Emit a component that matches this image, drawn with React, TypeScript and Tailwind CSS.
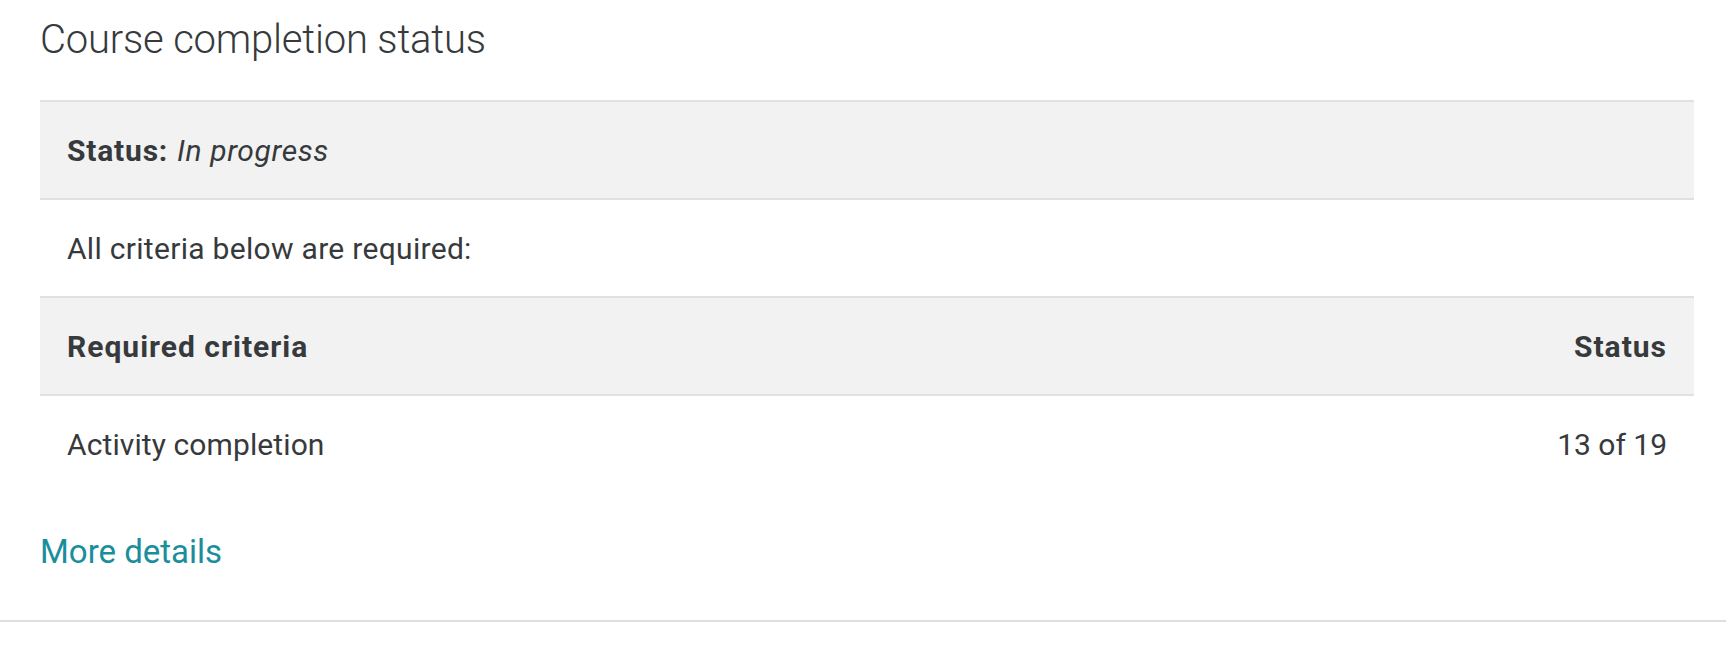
export default function App() {
  return (
    <div className="min-h-[646px] bg-white font-['Roboto',sans-serif] text-[#373a3c]">
      <section className="border-b-2 border-[#dedede] pb-[48px] pl-[40px] pr-[32px] pt-[16px]">
        <h3 className="text-[40px] font-light leading-[48px] tracking-[-0.2px]">
          Course completion status
        </h3>

        <div className="mt-[36px] text-[30px] leading-[45px] tracking-[0.3px]">
          <div className="flex h-[100px] items-center border-y-2 border-[#dee2e6] bg-[#f2f2f2] px-[27px]">
            <span className="font-bold tracking-[0.8px]">Status:</span>
            <span className="ml-[9px] italic tracking-[0.6px]">In progress</span>
          </div>

          <div className="flex h-[96px] items-center px-[27px]">
            All criteria below are required:
          </div>

          <div className="flex h-[100px] items-center justify-between border-y-2 border-[#dee2e6] bg-[#f2f2f2] px-[27px] font-bold tracking-[1px]">
            <span>Required criteria</span>
            <span>Status</span>
          </div>

          <div className="flex h-[96px] items-center justify-between px-[27px]">
            <span className="tracking-[0.1px]">Activity completion</span>
            <span className="tracking-normal">13 of 19</span>
          </div>
        </div>

        <a
          href="#"
          className="mt-[40px] block text-[33px] leading-[40px] text-[#1a8e9b]"
        >
          More details
        </a>
      </section>
    </div>
  );
}
